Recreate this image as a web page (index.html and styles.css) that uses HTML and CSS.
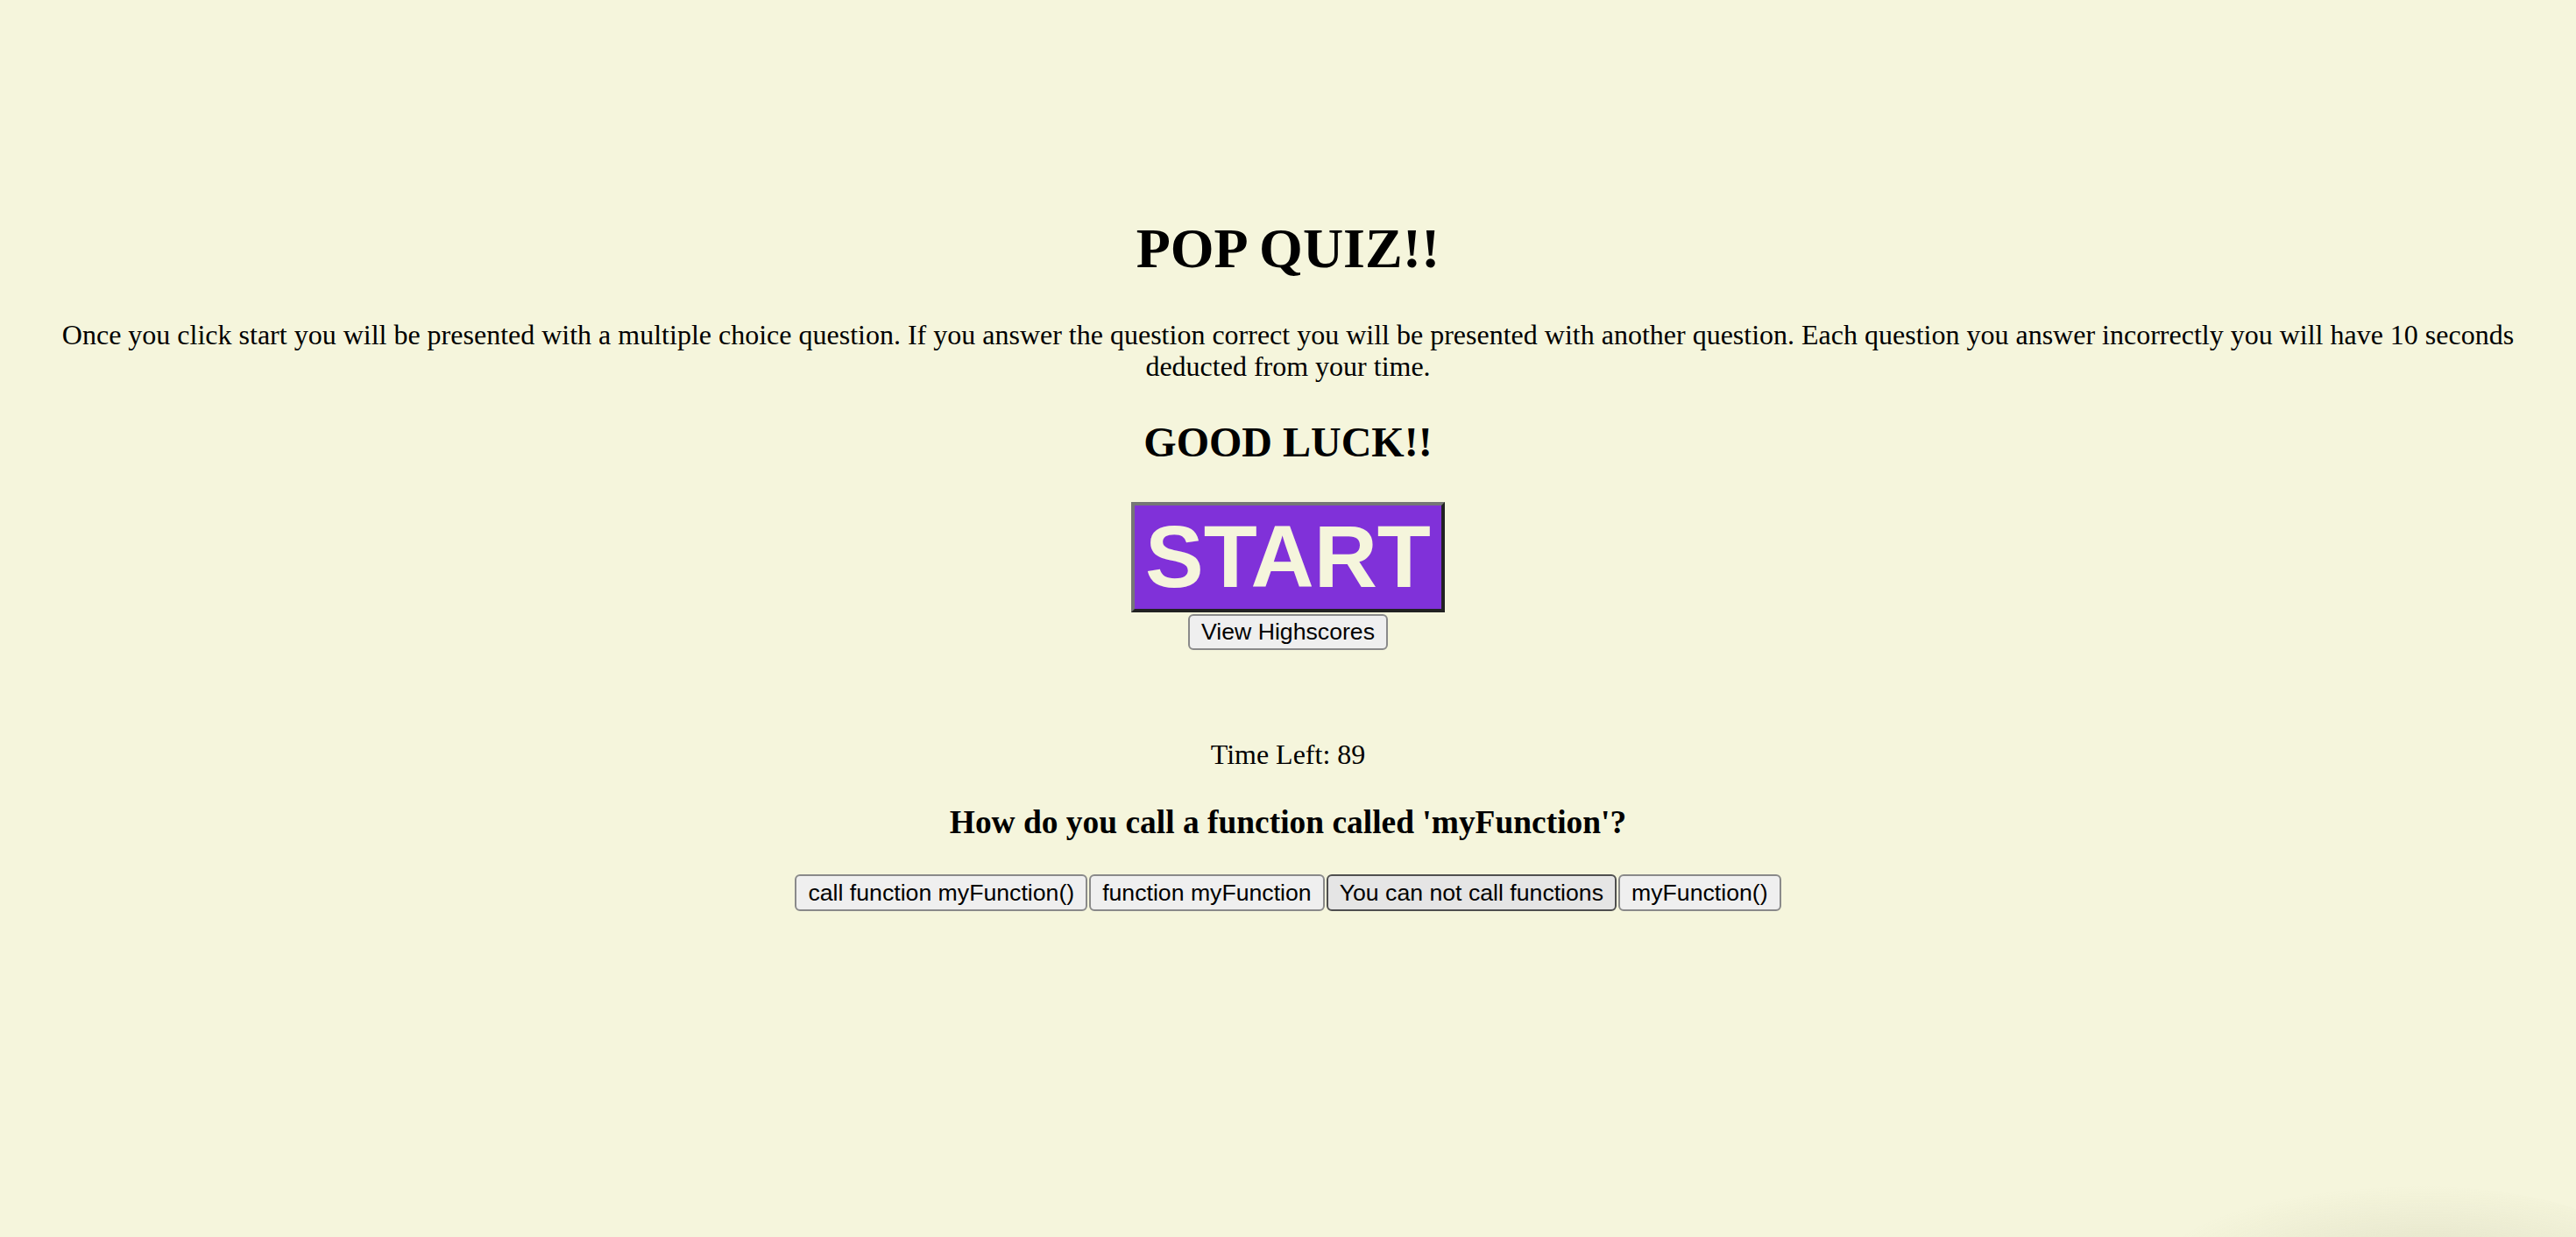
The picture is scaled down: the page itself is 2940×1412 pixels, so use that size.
FILE: index.html
```html
<!DOCTYPE html>
<html lang="en">
<head>
<meta charset="utf-8">
<title>Pop Quiz</title>
<link rel="stylesheet" href="styles.css">
</head>
<body>
  <main class="page">
    <section class="intro">
      <h1 class="title">POP QUIZ!!</h1>
      <p class="rules">Once you click start you will be presented with a multiple choice question. If you answer the question correct you will be presented with another question. Each question you answer incorrectly you will have 10 seconds deducted from your time.</p>
      <h2 class="luck">GOOD LUCK!!</h2>
      <div class="controls">
        <button class="start-btn" type="button">START</button>
        <button class="btn" type="button">View Highscores</button>
      </div>
    </section>
    <section class="quiz">
      <p class="timer">Time Left: 89</p>
      <h3 class="question">How do you call a function called 'myFunction'?</h3>
      <div class="choices">
        <button class="btn" type="button">call function myFunction()</button>
        <button class="btn" type="button">function myFunction</button>
        <button class="btn btn-hover" type="button">You can not call functions</button>
        <button class="btn" type="button">myFunction()</button>
      </div>
    </section>
  </main>
  <div class="corner-shadow" aria-hidden="true"></div>
</body>
</html>
```

FILE: styles.css
```css
html, body {
  margin: 0;
  padding: 0;
  background: #f5f5dc;
}

body {
  font-family: "Liberation Serif", "Times New Roman", serif;
  font-size: 32px;
  color: #000;
  text-align: center;
  overflow: hidden;
  min-height: 1412px;
}

.page {
  padding: 248px 16px 0;
  display: flex;
  flex-direction: column;
}

.intro {
  display: flex;
  flex-direction: column;
  align-items: center;
}

.title {
  margin: 0;
  font-size: 64px;
  line-height: 72px;
  font-weight: bold;
}

.rules {
  margin: 44px 0 0;
  font-size: 32px;
  line-height: 36px;
}

.luck {
  margin: 42px 0 0;
  font-size: 48px;
  line-height: 54px;
  font-weight: bold;
}

.controls {
  margin-top: 41px;
  display: flex;
  flex-direction: column;
  align-items: center;
  gap: 2px;
}

.start-btn {
  font-family: "Liberation Sans", Arial, sans-serif;
  font-weight: bold;
  font-size: 100px;
  line-height: 114px;
  height: 126px;
  padding: 0 12px 3px;
  margin: 0;
  color: #f5f5dc;
  background: #8031d9;
  border-style: solid;
  border-width: 4px;
  border-color: #767676 #222222 #222222 #767676;
  border-radius: 0;
}

.btn {
  font-family: "Liberation Sans", Arial, sans-serif;
  font-size: 26.67px;
  line-height: 33px;
  height: 41px;
  padding: 0 13px;
  margin: 0;
  color: #000;
  background: #efefef;
  border: 2px solid #8a8a8a;
  border-radius: 6px;
}

.btn-hover {
  background: #e5e5e5;
  border-color: #4f4f4f;
}

.quiz {
  display: flex;
  flex-direction: column;
  align-items: center;
  margin-top: 101px;
}

.timer {
  margin: 0;
  font-size: 32px;
  line-height: 36px;
}

.question {
  margin: 39px 0 0;
  font-size: 37.44px;
  line-height: 42px;
  font-weight: bold;
}

.choices {
  margin-top: 38px;
  display: flex;
  justify-content: center;
  gap: 2px;
}

.choices .btn {
  height: 42px;
}

.corner-shadow {
  position: fixed;
  right: -40px;
  bottom: -60px;
  width: 520px;
  height: 120px;
  border-radius: 50%;
  background: radial-gradient(ellipse at 60% 80%, rgba(120, 120, 80, 0.14), rgba(120, 120, 80, 0) 70%);
  pointer-events: none;
}
```
